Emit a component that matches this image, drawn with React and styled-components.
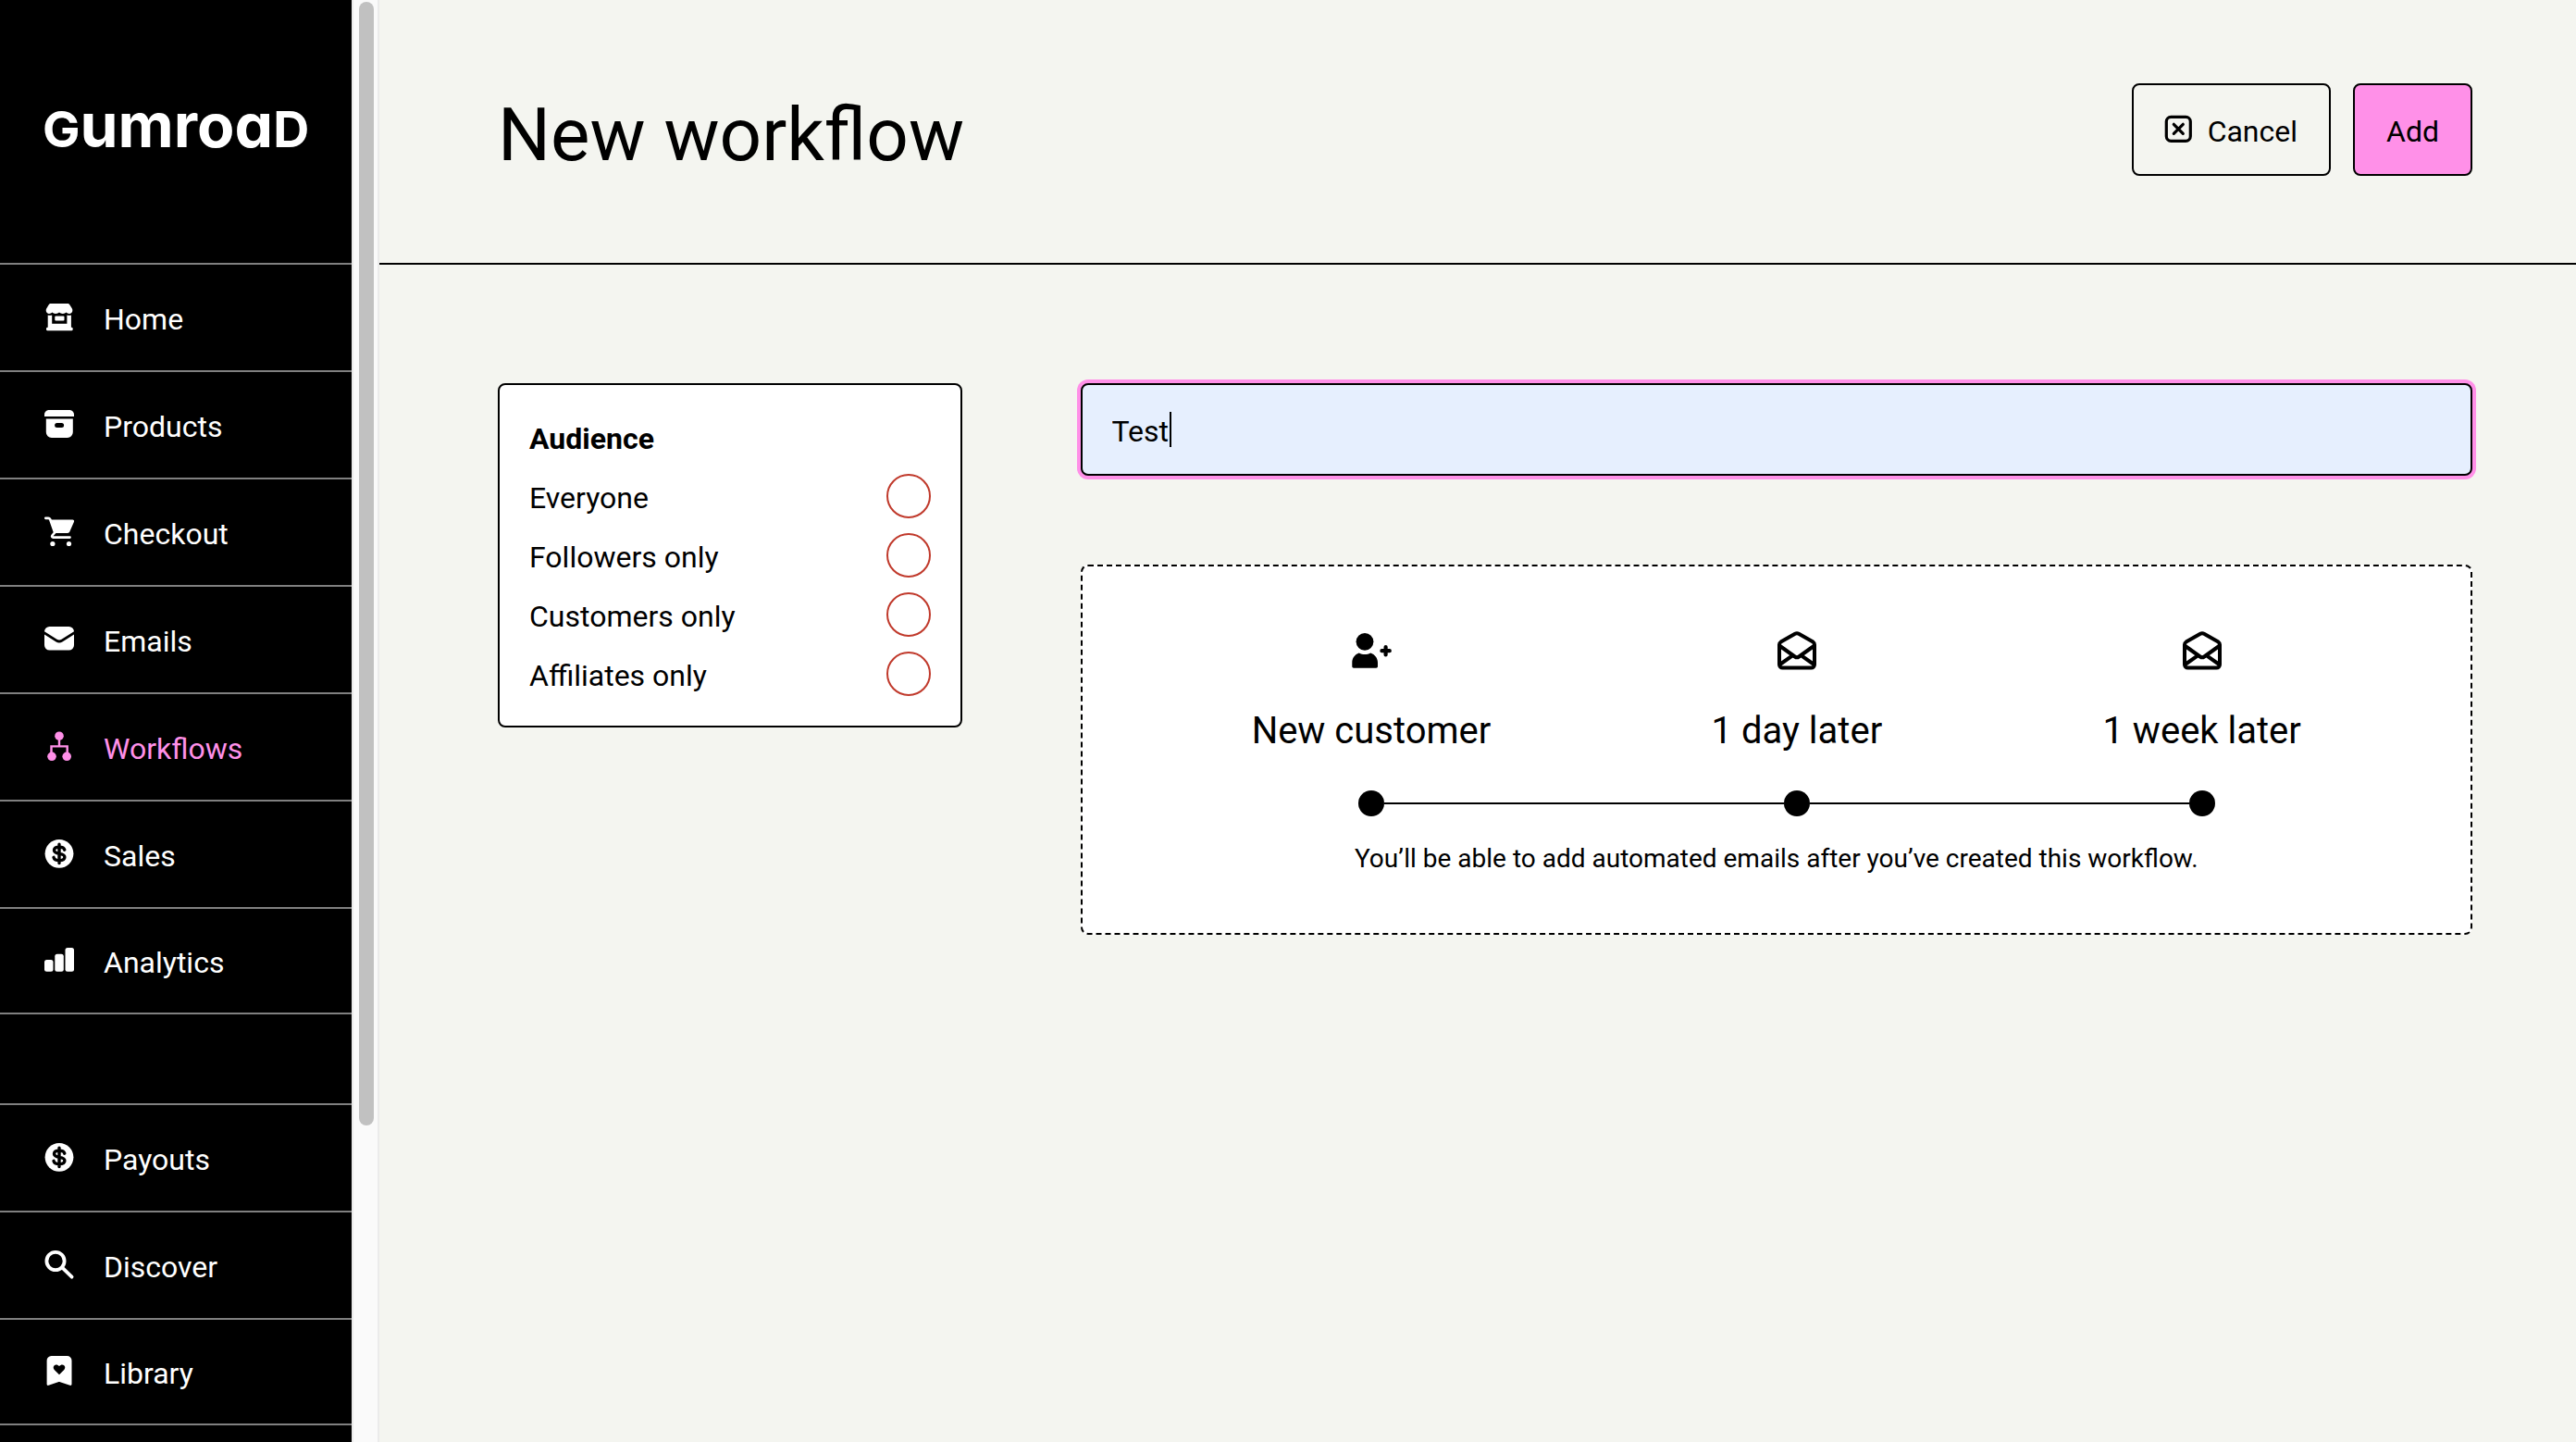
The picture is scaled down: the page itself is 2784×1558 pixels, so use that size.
import React, { useState } from "react";
import styled, { createGlobalStyle } from "styled-components";

const ink = "#000";
const paper = "#f4f5f0";
const pink = "#ff90e8";

const GlobalStyle = createGlobalStyle`
  *, *::before, *::after { box-sizing: border-box; }
  body {
    margin: 0;
    background: ${paper};
    color: ${ink};
    font-family: Roboto, "Liberation Sans", sans-serif;
    font-size: 32px;
    line-height: 44px;
  }
  button, input { font: inherit; color: inherit; }
`;

const Page = styled.div`
  display: grid;
  grid-template-columns: 380px 30px minmax(0, 1fr);
  min-height: 100vh;
`;

const Sidebar = styled.nav`
  position: sticky;
  top: 0;
  height: 100vh;
  overflow: hidden;
  background: ${ink};
  color: #fff;
`;

const Logo = styled.a`
  display: flex;
  align-items: center;
  height: 284px;
  padding: 0 46px;
  color: inherit;
  text-decoration: none;
`;

const Wordmark = styled.span`
  font-family: Inter, sans-serif;
  font-size: 66px;
  font-weight: 700;
  line-height: 80px;
  font-feature-settings: "cv11";
  padding-bottom: 10px;
`;

const SmallCap = styled.span`
  font-size: 54px;
`;

const NavGroup = styled.ul`
  list-style: none;
  margin: 0 0 96px;
  padding: 0;
`;

const NavItem = styled.li`
  height: 116px;
  border-top: 2px solid #808080;

  &:last-child { border-bottom: 2px solid #808080; }
`;

const NavLink = styled.a`
  display: flex;
  align-items: center;
  gap: 32px;
  height: 100%;
  padding: 0 48px;
  color: ${(p) => (p.$active ? pink : "#fff")};
  text-decoration: none;
`;

const Label = styled.span`
  padding-top: 4px;
`;

const ScrollTrack = styled.div`
  position: sticky;
  top: 0;
  height: 100vh;
  padding: 2px 4px 0 6px;
  background: #fafafa;
  border: solid #ebebeb;
  border-width: 0 2px;
`;

const ScrollThumb = styled.div`
  width: 16px;
  height: 78%;
  border-radius: 8px;
  background: #c1c1c1;
`;

const Header = styled.header`
  display: flex;
  align-items: center;
  justify-content: space-between;
  height: 286px;
  padding: 0 112px 4px 128px;
  border-bottom: 2px solid ${ink};
`;

const Title = styled.h1`
  margin: 0;
  padding-top: 12px;
  font-size: 80px;
  font-weight: 400;
  line-height: 96px;
`;

const Actions = styled.div`
  display: flex;
  gap: 24px;
`;

const Button = styled.button`
  display: flex;
  align-items: center;
  justify-content: center;
  gap: 16px;
  min-width: 128px;
  height: 100px;
  padding: 0 34px;
  border: 2px solid ${ink};
  border-radius: 8px;
  background: ${(p) => (p.$primary ? pink : "transparent")};
`;

const Content = styled.form`
  display: grid;
  grid-template-columns: minmax(0, 1fr) minmax(0, 3fr);
  align-items: start;
  gap: 128px;
  padding: 128px 112px 128px 128px;
`;

const Card = styled.div`
  padding: 32px;
  border: 2px solid ${ink};
  border-radius: 8px;
  background: #fff;
`;

const Options = styled.div`
  display: flex;
  flex-direction: column;
  gap: 16px;
`;

const OptionRow = styled.label`
  display: flex;
  align-items: center;
  justify-content: space-between;
  height: 48px;
`;

const GroupName = styled.div`
  display: flex;
  align-items: center;
  height: 48px;
  font-weight: 700;
`;

const Radio = styled.input`
  appearance: none;
  width: 48px;
  height: 48px;
  margin: 0;
  border: 2px solid #c0392b;
  border-radius: 50%;
  background: #fff;

  &:checked { box-shadow: inset 0 0 0 10px #fff; background: ${ink}; }
`;

const Main = styled.div`
  display: flex;
  flex-direction: column;
  gap: 96px;
`;

const Field = styled.div`
  position: relative;
  display: flex;
`;

const NameInput = styled.input`
  width: 100%;
  height: 100px;
  padding: 4px 32px 0;
  border: 2px solid ${ink};
  border-radius: 8px;
  outline: none;
  background: #e6effe;
  box-shadow: 0 0 0 4px ${pink};
  caret-color: transparent;
`;

const Caret = styled.span`
  position: absolute;
  top: 31px;
  left: 96px;
  width: 2px;
  height: 38px;
  background: ${ink};
`;

const Placeholder = styled.section`
  display: flex;
  flex-direction: column;
  gap: 24px;
  padding: 66px 64px 60px;
  border: 2px dashed ${ink};
  border-radius: 8px;
  background: #fff;
`;

const Timeline = styled.ol`
  display: flex;
  list-style: none;
  margin: 0;
  padding: 0;
`;

const Step = styled.li`
  flex: 1 1 auto;
  display: flex;
  flex-direction: column;
  align-items: center;
  gap: 32px;
`;

const StepIcon = styled.div`
  display: flex;
  align-items: center;
  height: 50px;
`;

const StepName = styled.h3`
  margin: 0;
  font-size: 40px;
  font-weight: 400;
  line-height: 60px;
`;

const Track = styled.div`
  display: flex;
  align-items: center;
  align-self: stretch;
  height: 32px;
`;

const Line = styled.span`
  flex: 1;
  height: 2px;
  background: ${(p) => (p.$blank ? "transparent" : ink)};
`;

const Dot = styled.span`
  width: 28px;
  height: 28px;
  border-radius: 50%;
  background: ${ink};
`;

const Note = styled.p`
  margin: 0;
  font-size: 28px;
  line-height: 40px;
  text-align: center;
`;

const Svg = styled.svg`
  flex: none;
  display: block;
  overflow: visible;
`;

function Icon({ size = 32, children }) {
  return (
    <Svg width={size} height={size} viewBox={`0 0 ${size} ${size}`} fill="currentColor" aria-hidden="true">
      {children}
    </Svg>
  );
}

const HomeIcon = () => (
  <Icon>
    <path d="M7 1h18c1 0 1.800.5 2.300 1.300l2.500 4c.6 1 .7 2.200.4 3.300-.5 1.500-1.700 2.300-3.200 2.300-1.500 0-2.700-.5-3.500-1.400-.8.9-2 1.400-3.600 1.400s-3-.5-3.900-1.400c-.9.900-2.300 1.400-3.900 1.400s-2.800-.5-3.600-1.400c-.8.900-2 1.400-3.500 1.400-1.500 0-2.600-.8-3.100-2.300-.3-1.100-.2-2.300.4-3.300l2.400-4C5.200 1.500 6 1 7 1z" />
    <path d="M3.700 13.600c1.600.4 3.200.3 4.500-.1V22.700h16.200v-9.200c1.300.4 2.900.5 4.500.1V26.800h.6c.7 0 1.200.6 1.200 1.300v1c0 .7-.5 1.200-1.200 1.200H3.200c-.7 0-1.200-.5-1.200-1.200v-1c0-.7.5-1.300 1.200-1.300h.5z" />
    <rect x="11.300" y="14.600" width="10.200" height="5" rx="1" />
  </Icon>
);

const ArchiveIcon = () => (
  <Icon>
    <path d="M5 0h22c2.800 0 5 2.200 5 5v2H0V5c0-2.800 2.200-5 5-5z" />
    <path fillRule="evenodd" d="M1.800 9.500h29V24a6 6 0 0 1-6 6h-17a6 6 0 0 1-6-6zM13.600 14a2.400 2.400 0 0 0 0 5h5a2.400 2.400 0 0 0 0-5z" />
  </Icon>
);

const CartIcon = () => (
  <Icon>
    <path d="M6.500 2.600h24c1.200 0 1.900 1 1.500 2.100L27.300 15.600c-.4.900-1.200 1.400-2.200 1.400H11.500z" />
    <path d="M1.300.8h2.900c.9 0 1.600.5 2 1.300l5 14.200-2.700 3.200c-.8 1-.2 2.100 1 2.100h18" fill="none" stroke="currentColor" strokeWidth="2.700" strokeLinecap="round" strokeLinejoin="round" />
    <circle cx="8.900" cy="28.500" r="2.600" />
    <circle cx="26.500" cy="28.500" r="2.600" />
  </Icon>
);

const MailIcon = () => (
  <Icon>
    <path d="M5.500 2h21A5.500 5.500 0 0 1 32 7.200L18.500 15.800c-1.600 1-3.400 1-5 0L0 7.200A5.500 5.500 0 0 1 5.500 2z" />
    <path d="M0 10.500l12.600 8c2.100 1.300 4.700 1.300 6.800 0L32 10.500V22a5.500 5.500 0 0 1-5.500 5.500h-21A5.500 5.500 0 0 1 0 22z" />
  </Icon>
);

const FlowIcon = () => (
  <Icon>
    <circle cx="16" cy="4.200" r="4.800" />
    <circle cx="8" cy="26.300" r="4.800" />
    <circle cx="24.200" cy="26.300" r="4.800" />
    <path d="M16 5v10M7.500 25v-9.600h17.200V25" fill="none" stroke="currentColor" strokeWidth="2.400" />
  </Icon>
);

const DollarIcon = () => (
  <Icon>
    <circle cx="16" cy="15.300" r="15.400" />
    <path d="M16 5.200v20.400M21.800 11.200c-.5-1.900-2.600-3.100-5.600-3.100-3.300 0-5.700 1.200-5.700 3.600 0 5.200 11.400 2 11.400 7.200 0 2.400-2.500 3.700-5.900 3.700-3.300 0-5.500-1.300-6-3.300" fill="none" stroke="#000" strokeWidth="3.400" strokeLinecap="round" />
  </Icon>
);

const ChartIcon = () => (
  <Icon>
    <rect x="0" y="15" width="9.500" height="12.800" rx="2.500" />
    <rect x="11.300" y="8.800" width="9.500" height="19" rx="2.500" />
    <rect x="22.500" y="2" width="9.500" height="25.800" rx="2.500" />
  </Icon>
);

const SearchIcon = () => (
  <Icon>
    <g fill="none" stroke="currentColor" strokeWidth="3.800" strokeLinecap="round">
      <circle cx="12" cy="11.500" r="9.600" />
      <path d="M19.300 18.600L29.600 28.700" />
    </g>
  </Icon>
);

const BookmarkIcon = () => (
  <Icon>
    <path fillRule="evenodd" d="M7.500-1h17a5 5 0 0 1 5 5v25.500c0 1.100-.9 1.700-1.900 1.300L17 27.200c-.8-.3-1.400-.3-2.200 0L4.500 30.800c-1 .4-1.900-.2-1.900-1.300V4a5 5 0 0 1 4.900-5zM16 19.200l5.300-5.300c1.300-1.300 1.300-3.300.2-4.400-1.400-1.400-3.700-1.400-5.500.6-1.800-2-4.100-2-5.500-.6-1.100 1.100-1.100 3.100.2 4.400z" />
  </Icon>
);

const CloseBoxIcon = () => (
  <Icon size={30}>
    <g fill="none" stroke="currentColor" strokeLinecap="round">
      <rect x="1.300" y="1.300" width="26" height="26" rx="5" strokeWidth="3.200" />
      <path d="M9.300 9.300l10 10M19.300 9.300l-10 10" strokeWidth="3.200" />
    </g>
  </Icon>
);

const PersonPlusIcon = () => (
  <Icon size={48}>
    <circle cx="17" cy="14.300" r="9.400" />
    <path d="M10.800 26.600c3.800 2 8.600 2 12.400 0 4.600 1.500 7.800 5.500 7.800 10.400v4c0 1-.8 1.700-1.700 1.700H5c-1 0-1.700-.7-1.700-1.700v-4c0-4.900 3-8.900 7.500-10.400z" />
    <path d="M39.600 20v8.400M35.400 24.200h8.400" fill="none" stroke="currentColor" strokeWidth="4.200" strokeLinecap="round" />
  </Icon>
);

const OpenMailIcon = () => (
  <Icon size={48}>
    <g fill="none" stroke="currentColor" strokeWidth="4" strokeLinejoin="round">
      <path d="M5 17.500V39a3.500 3.500 0 0 0 3.500 3.500h31A3.500 3.500 0 0 0 43 39V17.500c0-1.200-.6-2.200-1.600-2.900L26 5.800a4 4 0 0 0-4 0L6.600 14.600A3.400 3.400 0 0 0 5 17.500z" />
      <path d="M5 18.500l16.800 12c1.400 1 3 1 4.400 0L43 18.500M5.500 39l14-9.800M42.500 39l-14-9.800" />
    </g>
  </Icon>
);

const primaryNav = [
  ["Home", HomeIcon],
  ["Products", ArchiveIcon],
  ["Checkout", CartIcon],
  ["Emails", MailIcon],
  ["Workflows", FlowIcon],
  ["Sales", DollarIcon],
  ["Analytics", ChartIcon],
];

const secondaryNav = [
  ["Payouts", DollarIcon],
  ["Discover", SearchIcon],
  ["Library", BookmarkIcon],
];

const audiences = ["Everyone", "Followers only", "Customers only", "Affiliates only"];

const steps = [
  ["New customer", PersonPlusIcon],
  ["1 day later", OpenMailIcon],
  ["1 week later", OpenMailIcon],
];

function Nav({ items, active }) {
  return (
    <NavGroup>
      {items.map(([name, Glyph]) => (
        <NavItem key={name}>
          <NavLink href="#" $active={name === active} aria-current={name === active ? "page" : undefined}>
            <Glyph />
            <Label>{name}</Label>
          </NavLink>
        </NavItem>
      ))}
    </NavGroup>
  );
}

export default function App() {
  const [name, setName] = useState("Test");

  return (
    <>
      <GlobalStyle />
      <Page>
        <Sidebar aria-label="Main">
          <Logo href="#">
            <Wordmark>
              <SmallCap>G</SmallCap>umroa<SmallCap>D</SmallCap>
            </Wordmark>
          </Logo>
          <Nav items={primaryNav} active="Workflows" />
          <Nav items={secondaryNav} />
        </Sidebar>
        <ScrollTrack aria-hidden="true">
          <ScrollThumb />
        </ScrollTrack>
        <main>
          <Header>
            <Title>New workflow</Title>
            <Actions>
              <Button type="button">
                <CloseBoxIcon />
                <Label>Cancel</Label>
              </Button>
              <Button type="submit" form="workflow" $primary>
                <Label>Add</Label>
              </Button>
            </Actions>
          </Header>
          <Content id="workflow" onSubmit={(e) => e.preventDefault()}>
            <Card>
              <Options role="radiogroup" aria-labelledby="audience">
                <GroupName id="audience">
                  <Label>Audience</Label>
                </GroupName>
                {audiences.map((option) => (
                  <OptionRow key={option}>
                    <Label>{option}</Label>
                    <Radio type="radio" name="audience" value={option} />
                  </OptionRow>
                ))}
              </Options>
            </Card>
            <Main>
              <Field>
                <NameInput
                  type="text"
                  aria-label="Name"
                  value={name}
                  onChange={(e) => setName(e.target.value)}
                />
                {name === "Test" && <Caret />}
              </Field>
              <Placeholder>
                <Timeline>
                  {steps.map(([label, Glyph], i) => (
                    <Step key={label}>
                      <StepIcon>
                        <Glyph />
                      </StepIcon>
                      <StepName>{label}</StepName>
                      <Track>
                        <Line $blank={i === 0} />
                        <Dot />
                        <Line $blank={i === steps.length - 1} />
                      </Track>
                    </Step>
                  ))}
                </Timeline>
                <Note>You’ll be able to add automated emails after you’ve created this workflow.</Note>
              </Placeholder>
            </Main>
          </Content>
        </main>
      </Page>
    </>
  );
}
